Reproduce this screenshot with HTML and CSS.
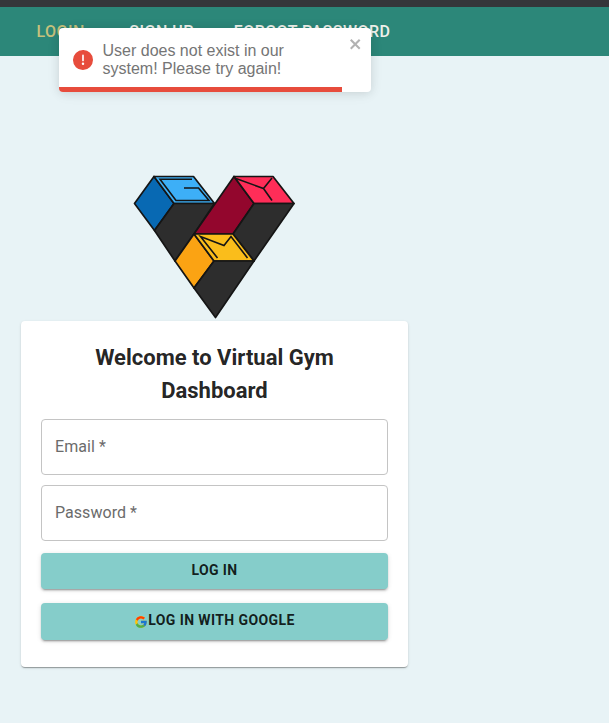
FILE: index.html
```html
<!DOCTYPE html>
<html lang="en">
<head>
<meta charset="utf-8">
<title>Virtual Gym Dashboard</title>
<link rel="stylesheet" href="styles.css">
</head>
<body>
<nav class="navbar">
  <a class="nav-link active">LOGIN</a>
  <a class="nav-link">SIGN UP</a>
  <a class="nav-link">FORGOT PASSWORD</a>
</nav>
<div class="toast" role="alert">
  <svg class="toast-icon" viewBox="0 0 24 24"><path fill="#e74c3c" d="M11.983 0a12.206 12.206 0 00-8.51 3.653A11.8 11.8 0 000 12.207 11.779 11.779 0 0011.8 24h.214A12.111 12.111 0 0024 11.791 11.766 11.766 0 0011.983 0zM10.5 16.542a1.476 1.476 0 011.449-1.53h.027a1.527 1.527 0 011.523 1.47 1.475 1.475 0 01-1.449 1.53h-.027a1.529 1.529 0 01-1.523-1.47zM11 12.5v-6a1 1 0 012 0v6a1 1 0 11-2 0z"/></svg>
  <p class="toast-text">User does not exist in our system! Please try again!</p>
  <svg class="toast-close" viewBox="0 0 14 16"><path fill="#b2b2b2" fill-rule="evenodd" d="M7.71 8.23l3.75 3.75-1.48 1.48-3.75-3.75-3.75 3.75L1 11.98l3.75-3.75L1 4.48 2.48 3l3.75 3.75L9.98 3l1.48 1.48-3.75 3.75z"/></svg>
  <div class="toast-progress"></div>
</div>
<main class="page">
  <svg class="logo" viewBox="130 170 170 150">
    <g stroke="#151515" stroke-width="1.7" stroke-linejoin="round">
      <path fill="#0869b3" d="M134.500 203.500 154 176.500l20 27-19.500 27z"/>
      <path fill="#3daff7" d="M154 176.500h39.500l21 27H174z"/>
      <path fill="#2d2d2d" d="M174 203.500h40.500L194 234l-19 27-20.500-30.500z"/>
      <path fill="#93062d" d="M234 176.500l20 27-21 30.500h-39z"/>
      <path fill="#ff2d58" d="M234 176.500h39l21 27h-40z"/>
      <path fill="#2d2d2d" d="M254 203.500h40L254 261l-21-27z"/>
      <path fill="#fba313" d="M194 234l20 27-20 27-19-27z"/>
      <path fill="#fabd1b" d="M194 234h39l21 27h-40z"/>
      <path fill="#2d2d2d" d="M214 261h40l-38.500 56.500L194 288z"/>
    </g>
    <g fill="none" stroke="#151515" stroke-width="1.600">
      <path d="M192 179.300h-32l16 21.200h33l-10.500-12.500h-14.500"/>
      <path d="M236 178.500 263.500 188.500 272 178M263.500 188.500l8.500 12"/>
      <path d="M217.500 258 200.500 236.500 224 245.500 231 236.500 247.500 258"/>
    </g>
  </svg>
  <form class="card">
    <h1 class="title">Welcome to Virtual Gym Dashboard</h1>
    <div class="field">Email *</div>
    <div class="field">Password *</div>
    <button type="button" class="btn">LOG IN</button>
    <button type="button" class="btn btn-google"><svg class="google" viewBox="0 0 48 48"><path fill="#ffc107" d="M43.600 20H24v8h11.300A12 12 0 1 1 32 15l5.700-5.700A20 20 0 1 0 43.600 20z"/><path fill="#ff3d00" d="M6.300 14.700l6.600 4.800A12 12 0 0 1 32 15l5.700-5.700A20 20 0 0 0 6.300 14.700z"/><path fill="#4caf50" d="M24 44c5.200 0 9.900-2 13.400-5.200l-6.200-5.200A12 12 0 0 1 12.700 28l-6.500 5A20 20 0 0 0 24 44z"/><path fill="#1976d2" d="M43.600 20H24v8h11.300a12 12 0 0 1-4.100 5.600l6.200 5.200C37 39.200 44 34 44 24c0-1.300-.1-2.700-.4-4z"/></svg>LOG IN WITH GOOGLE</button>
  </form>
</main>
</body>
</html>
```
FILE: styles.css
```css
* {
  box-sizing: border-box;
}

body {
  margin: 0;
  min-height: 723px;
  background: #e8f3f6;
  font-family: Roboto, sans-serif;
  color: rgba(0, 0, 0, 0.87);
}

.navbar {
  display: flex;
  gap: 44.500px;
  height: 56px;
  padding: 14px 36.500px 0;
  border-top: 7px solid #35363a;
  background: #2c8779;
}

.nav-link {
  color: #eef0ea;
  font-size: 16px;
  font-weight: 500;
  line-height: 21px;
  letter-spacing: 0.48px;
  white-space: nowrap;
}

.nav-link + .nav-link + .nav-link {
  margin-left: -4.500px;
}

.nav-link.active {
  color: #c6c17c;
}

.toast {
  position: absolute;
  top: 28px;
  left: 59px;
  display: flex;
  width: 312px;
  height: 64px;
  padding: 14px;
  overflow: hidden;
  border-radius: 4px;
  background: #fff;
  box-shadow: 0 1px 10px rgba(0, 0, 0, 0.1), 0 2px 15px rgba(0, 0, 0, 0.05);
}

.toast-icon {
  flex: none;
  width: 20px;
  height: 20px;
  margin: 8px 9.500px 0 0;
}

.toast-text {
  width: 220px;
  margin: 0;
  color: #757575;
  font: 16px/18px "Liberation Sans", sans-serif;
}

.toast-close {
  position: absolute;
  top: 8px;
  right: 8px;
  width: 14px;
  height: 16px;
}

.toast-progress {
  position: absolute;
  bottom: 0;
  left: 0;
  width: 283px;
  height: 5px;
  background: #e74c3c;
}

.page {
  width: 387px;
  margin-left: 21px;
  padding-top: 114px;
}

.logo {
  display: block;
  width: 170px;
  height: 150px;
  margin-left: 109px;
}

.card {
  display: flex;
  flex-direction: column;
  height: 346px;
  margin-top: 1px;
  padding: 20px;
  border-radius: 4px;
  background: #fff;
  box-shadow: 0 2px 1px -1px rgba(0, 0, 0, 0.2), 0 1px 1px rgba(0, 0, 0, 0.14), 0 1px 3px rgba(0, 0, 0, 0.12);
}

.title {
  margin: 0 0 12px;
  padding: 0 40px;
  font-size: 22px;
  font-weight: 700;
  line-height: 33px;
  text-align: center;
}

.field {
  flex: none;
  height: 56px;
  margin-bottom: 10px;
  padding: 0 13px;
  border: 1px solid #c4c4c4;
  border-radius: 4px;
  color: #6b6b6b;
  font-size: 16px;
  line-height: 54px;
  letter-spacing: 0.05px;
}

.btn {
  display: flex;
  flex: none;
  align-items: center;
  justify-content: center;
  height: 36px;
  margin: 2px 0 14px;
  padding: 0 0 2px;
  border: 0;
  border-radius: 4px;
  background: #85cdca;
  box-shadow: 0 3px 1px -2px rgba(0, 0, 0, 0.2), 0 2px 2px rgba(0, 0, 0, 0.14), 0 1px 5px rgba(0, 0, 0, 0.12);
  color: rgba(0, 0, 0, 0.87);
  font-family: Roboto, sans-serif;
  font-size: 14px;
  font-weight: 700;
  letter-spacing: 0.4px;
}

.btn-google {
  height: 37px;
  margin: 0;
  padding-bottom: 3px;
}

.google {
  width: 14px;
  height: 14px;
  margin-top: 4px;
}
```
